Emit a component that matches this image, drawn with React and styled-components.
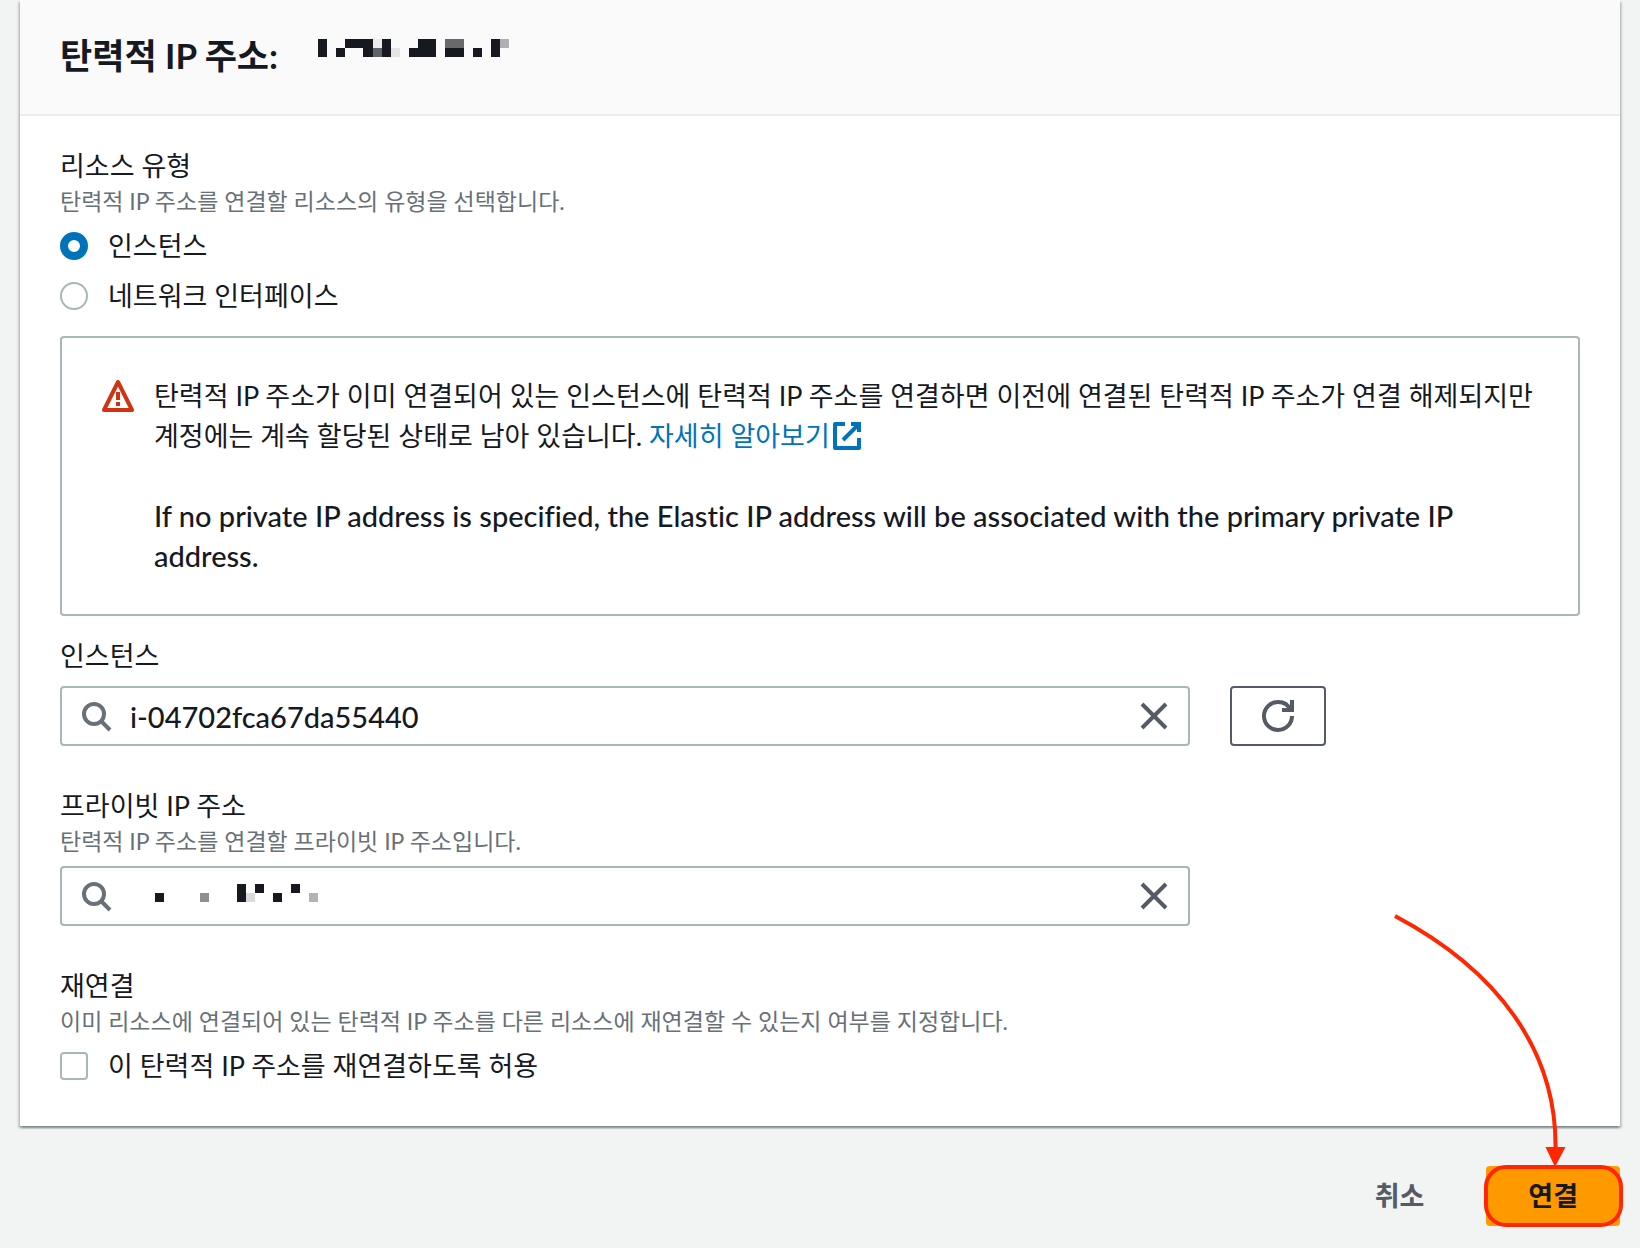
import React, { useState } from "react";
import styled, { createGlobalStyle } from "styled-components";

const GlobalStyle = createGlobalStyle`
  *, *::before, *::after { box-sizing: border-box; }
  body {
    margin: 0;
    background: #f2f3f3;
    color: #16191f;
    font-family: Lato, "Noto Sans CJK KR", sans-serif;
    font-size: 27px;
    line-height: 40px;
    word-break: keep-all;
  }
  button, input { font: inherit; color: inherit; }
`;

const Page = styled.main`
  padding: 0 20px 22px;
`;

const Card = styled.section`
  background: #fff;
  box-shadow: 0 2px 2px rgba(0, 28, 36, 0.3), 2px 2px 2px rgba(0, 28, 36, 0.15),
    -2px 2px 2px rgba(0, 28, 36, 0.15);
`;

const CardHeader = styled.header`
  display: flex;
  gap: 40px;
  height: 116px;
  padding: 0 40px;
  background: #fafafa;
  border-bottom: 2px solid #eaeded;
`;

const Title = styled.h2`
  margin: 0;
  padding-top: 33px;
  font-size: 35px;
  font-weight: 700;
  line-height: 44px;
`;

const CardBody = styled.div`
  display: flex;
  flex-direction: column;
  gap: 40px;
  padding: 30px 40px 40px;
`;

const Stack = styled.div`
  display: flex;
  flex-direction: column;
  gap: 20px;
`;

const Field = styled.div`
  min-width: 0;
`;

const FieldSet = styled.fieldset`
  min-width: 0;
  margin: 0;
  padding: 0;
  border: 0;
`;

const Label = styled.label`
  display: block;
`;

const Legend = styled.legend`
  display: block;
  padding: 0;
`;

const Hint = styled.p`
  margin: 0 0 10px;
  color: #687078;
  font-size: 23px;
  line-height: 30px;
`;

const Options = styled.div`
  display: flex;
  flex-direction: column;
  gap: 10px;
`;

const Option = styled.label`
  display: flex;
  align-items: center;
  gap: 20px;
`;

const Radio = styled.input`
  appearance: none;
  flex: none;
  width: 28px;
  height: 28px;
  margin: 0;
  border: 2px solid #aab7b8;
  border-radius: 50%;
  background: #fff;
  &:checked { border: 8px solid #0073bb; }
`;

const Checkbox = styled.input`
  appearance: none;
  flex: none;
  width: 28px;
  height: 28px;
  margin: 0;
  border: 2px solid #aab7b8;
  border-radius: 4px;
  background: #fff;
  &:checked { background: #0073bb; border-color: #0073bb; }
`;

const Alert = styled.div`
  display: flex;
  gap: 20px;
  padding: 38px 40px;
  border: 2px solid #aab7b8;
  border-radius: 4px;
`;

const AlertIcon = styled.div`
  display: flex;
  align-items: center;
  flex: none;
  height: 40px;
  color: #d13212;
`;

const AlertText = styled.div`
  display: flex;
  flex-direction: column;
  gap: 40px;
  min-width: 0;
`;

const Paragraph = styled.p`
  margin: 0;
`;

const LatinParagraph = styled(Paragraph)`
  font-size: 29px;
  font-weight: 500;
  font-variant-ligatures: none;
`;

const Link = styled.a`
  color: #0073bb;
  text-decoration: none;
  svg { margin-left: 1px; vertical-align: -6px; }
`;

const ControlRow = styled.div`
  display: flex;
  gap: 40px;
  margin-top: ${(p) => (p.$spaced ? "10px" : "0")};
`;

const SearchBox = styled.div`
  display: flex;
  align-items: center;
  flex: 0 1 1130px;
  height: 60px;
  padding: 0 18px;
  border: 2px solid #aab7b8;
  border-radius: 4px;
  background: #fff;
  color: #687078;
`;

const SearchInput = styled.input`
  flex: 1;
  min-width: 0;
  height: 100%;
  padding: 0 18px;
  border: 0;
  outline: 0;
  background: transparent;
  color: #16191f;
  font-size: 29px;
  font-weight: 500;
`;

const IconButton = styled.button`
  display: flex;
  padding: 0;
  border: 0;
  background: none;
  color: #545b64;
  cursor: pointer;
`;

const RefreshButton = styled.button`
  display: flex;
  align-items: center;
  justify-content: center;
  flex: none;
  width: 96px;
  height: 60px;
  padding: 0;
  border: 2px solid #545b64;
  border-radius: 4px;
  background: #fff;
  color: #545b64;
  cursor: pointer;
`;

const Mask = styled.svg`
  display: block;
  flex: none;
  width: ${(p) => p.$width}px;
  height: 18px;
`;

const HeaderMask = styled.div`
  padding-top: 39px;
`;

const InputMask = styled.div`
  align-self: flex-start;
  padding: 16px 0 0 43px;
`;

const Actions = styled.footer`
  display: flex;
  justify-content: flex-end;
  gap: 20px;
  padding-top: 40px;
`;

const Action = styled.button`
  height: 60px;
  padding: 0 42px;
  border: 0;
  border-radius: 4px;
  background: ${(p) => (p.$primary ? "#ff9900" : "transparent")};
  color: ${(p) => (p.$primary ? "#16191f" : "#545b64")};
  font-weight: 700;
  cursor: pointer;
`;

const Highlighted = styled.div`
  position: relative;
  &::after {
    content: "";
    position: absolute;
    inset: -1px -3px -1px -2px;
    border: 4px solid #ff2600;
    border-radius: 22px;
    pointer-events: none;
  }
`;

const Arrow = styled.svg`
  position: absolute;
  right: 50px;
  bottom: 56px;
  width: 180px;
  height: 260px;
  pointer-events: none;
`;

const Icon = ({ size = 32, children }) => (
  <svg width={size} height={size} viewBox="0 0 16 16" fill="none" stroke="currentColor" strokeWidth="2" aria-hidden="true">
    {children}
  </svg>
);

const SearchIcon = () => (
  <Icon>
    <circle cx="7" cy="7" r="5" />
    <path d="M15 15l-4.5-4.5" />
  </Icon>
);

const CloseIcon = () => (
  <Icon>
    <path d="M2 2l12 12M14 2L2 14" />
  </Icon>
);

const RefreshIcon = () => (
  <Icon>
    <path d="M10 5h5V0" />
    <path d="M15 8a6.957 6.957 0 0 1-7 7 6.957 6.957 0 0 1-7-7 6.957 6.957 0 0 1 7-7 6.87 6.87 0 0 1 6.3 4" />
  </Icon>
);

const WarningIcon = () => (
  <Icon>
    <path strokeLinejoin="round" d="M8 1l7 14H1L8 1z" />
    <path d="M8 6v4M8 11v2" />
  </Icon>
);

const ExternalIcon = () => (
  <Icon>
    <path d="M10 2h4v4M6 10l8-8" />
    <path strokeLinejoin="round" d="M14 9.048V14H2V2h5" />
  </Icon>
);

const INK = "#16191f";

// Each block: [column, row, columns, rows, fill]
const ELASTIC_BLOCKS = [
  [0, 0, 1, 2, INK], [2, 1, 1, 1, INK], [3, 0, 3, 1, INK], [5, 1, 1, 1, INK],
  [6, 0, 1, 1, "#ebebec"], [6, 1, 1, 1, "#626366"], [7, 0, 1, 2, INK],
  [8, 1, 1, 1, "#e5e5e6"], [10, 1, 1, 1, INK], [11, 0, 2, 2, INK],
  [14, 0, 2, 1, "#69696c"], [14, 1, 2, 1, INK], [17, 1, 1, 1, INK],
  [19, 0, 1, 2, INK], [20, 0, 1, 1, "#b0b0b2"],
];

const PRIVATE_BLOCKS = [
  [0, 1, 1, 1, INK], [5, 1, 1, 1, "#8f8f93"], [9, 0, 1, 2, INK],
  [10, 1, 1, 1, "#dadadb"], [11, 0, 1, 1, INK], [13, 1, 1, 1, INK],
  [15, 0, 1, 1, INK], [17, 1, 1, 1, "#b3b3b5"],
];

const MaskedText = ({ blocks, columns, width }) => (
  <Mask $width={width} viewBox={`0 0 ${columns} 2`} preserveAspectRatio="none" shapeRendering="crispEdges" aria-hidden="true">
    {blocks.map(([x, y, w, h, fill]) => (
      <rect key={`${x}-${y}`} x={x} y={y} width={w} height={h} fill={fill} />
    ))}
  </Mask>
);

export default function App() {
  const [type, setType] = useState("instance");
  const [instance, setInstance] = useState("i-04702fca67da55440");
  const [privateIp, setPrivateIp] = useState("");
  const [masked, setMasked] = useState(true);
  const [allow, setAllow] = useState(false);

  return (
    <>
      <GlobalStyle />
      <Page>
        <Card>
          <CardHeader>
            <Title>탄력적 IP 주소:</Title>
            <HeaderMask>
              <MaskedText blocks={ELASTIC_BLOCKS} columns={21} width={191} />
            </HeaderMask>
          </CardHeader>
          <CardBody>
            <Stack>
              <FieldSet>
                <Legend>리소스 유형</Legend>
                <Hint>탄력적 IP 주소를 연결할 리소스의 유형을 선택합니다.</Hint>
                <Options>
                  <Option>
                    <Radio type="radio" name="type" checked={type === "instance"} onChange={() => setType("instance")} />
                    인스턴스
                  </Option>
                  <Option>
                    <Radio type="radio" name="type" checked={type === "network"} onChange={() => setType("network")} />
                    네트워크 인터페이스
                  </Option>
                </Options>
              </FieldSet>
              <Alert role="note">
                <AlertIcon>
                  <WarningIcon />
                </AlertIcon>
                <AlertText>
                  <Paragraph>
                    탄력적 IP 주소가 이미 연결되어 있는 인스턴스에 탄력적 IP 주소를 연결하면 이전에 연결된 탄력적 IP 주소가 연결 해제되지만 계정에는 계속 할당된 상태로 남아 있습니다.{" "}
                    <Link href="#learn-more">
                      자세히 알아보기
                      <ExternalIcon />
                    </Link>
                  </Paragraph>
                  <LatinParagraph>
                    If no private IP address is specified, the Elastic IP address will be associated with the primary private IP address.
                  </LatinParagraph>
                </AlertText>
              </Alert>
              <Field>
                <Label htmlFor="instance">인스턴스</Label>
                <ControlRow $spaced>
                  <SearchBox>
                    <SearchIcon />
                    <SearchInput id="instance" value={instance} onChange={(e) => setInstance(e.target.value)} />
                    <IconButton type="button" aria-label="지우기" onClick={() => setInstance("")}>
                      <CloseIcon />
                    </IconButton>
                  </SearchBox>
                  <RefreshButton type="button" aria-label="새로 고침">
                    <RefreshIcon />
                  </RefreshButton>
                </ControlRow>
              </Field>
            </Stack>
            <Field>
              <Label htmlFor="private-ip">프라이빗 IP 주소</Label>
              <Hint>탄력적 IP 주소를 연결할 프라이빗 IP 주소입니다.</Hint>
              <ControlRow>
                <SearchBox>
                  <SearchIcon />
                  {masked && (
                    <InputMask>
                      <MaskedText blocks={PRIVATE_BLOCKS} columns={18} width={163} />
                    </InputMask>
                  )}
                  <SearchInput id="private-ip" value={privateIp} onChange={(e) => setPrivateIp(e.target.value)} />
                  <IconButton type="button" aria-label="지우기" onClick={() => { setMasked(false); setPrivateIp(""); }}>
                    <CloseIcon />
                  </IconButton>
                </SearchBox>
              </ControlRow>
            </Field>
            <FieldSet>
              <Legend>재연결</Legend>
              <Hint>이미 리소스에 연결되어 있는 탄력적 IP 주소를 다른 리소스에 재연결할 수 있는지 여부를 지정합니다.</Hint>
              <Option>
                <Checkbox type="checkbox" checked={allow} onChange={(e) => setAllow(e.target.checked)} />
                이 탄력적 IP 주소를 재연결하도록 허용
              </Option>
            </FieldSet>
          </CardBody>
        </Card>
        <Actions>
          <Action type="button">취소</Action>
          <Highlighted>
            <Action type="button" $primary>연결</Action>
            <Arrow viewBox="0 0 180 260" fill="none" aria-hidden="true">
              <path d="M5 6C107 60 167 140 165.500 239" stroke="#ff2600" strokeWidth="4" />
              <path d="M155.500 237h20l-10.500 20z" fill="#ff2600" />
            </Arrow>
          </Highlighted>
        </Actions>
      </Page>
    </>
  );
}
